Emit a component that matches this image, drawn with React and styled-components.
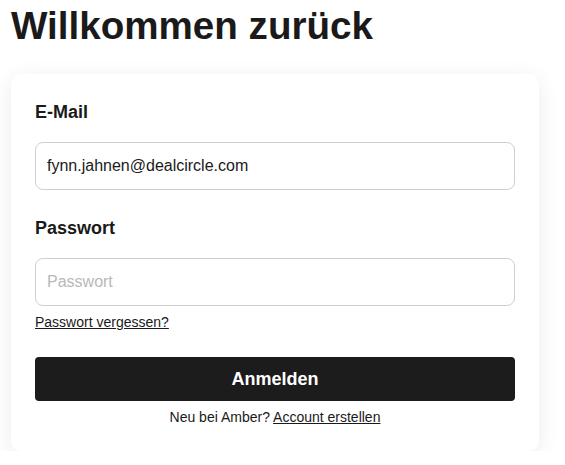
import React from "react";
import styled, { createGlobalStyle } from "styled-components";

const Global = createGlobalStyle`
  html, body { margin: 0; padding: 0; background: #ffffff; }
  body { font-family: "Liberation Sans", Arial, sans-serif; color: #1a1a1a; }
  * { box-sizing: border-box; }
`;

const Page = styled.div`
  padding: 3px 26px 0 11px;
  display: flex;
  flex-direction: column;
`;

const Title = styled.h1`
  margin: 0 0 25px;
  font-size: 38.6px;
  line-height: 46px;
  font-weight: 700;
  color: #1a1a1a;
`;

const Card = styled.div`
  width: 528px;
  background: #fff;
  border-radius: 10px;
  box-shadow: 0 4px 22px rgba(0, 0, 0, 0.08);
  padding: 24px;
  display: flex;
  flex-direction: column;
`;

const Label = styled.label`
  font-size: 18px;
  line-height: 28px;
  font-weight: 700;
  margin-bottom: 16px;
`;

const Input = styled.input`
  height: 48px;
  width: 100%;
  border: 1px solid #cfcfcf;
  border-radius: 8px;
  padding: 0 11px;
  font-family: "Liberation Sans", Arial, sans-serif;
  font-size: 16px;
  color: #1a1a1a;
  outline: none;
  margin-bottom: ${(p) => p.$mb || 0}px;
  &::placeholder { color: #b8b8b8; }
`;

const Link = styled.a`
  font-size: 14px;
  line-height: 20px;
  color: #1a1a1a;
  text-decoration: underline;
  cursor: pointer;
`;

const Forgot = styled.div`
  margin-top: 6px;
  margin-bottom: 25px;
  font-size: 14px;
  line-height: 20px;
`;

const Button = styled.button`
  height: 44px;
  width: 100%;
  border: none;
  border-radius: 4px;
  background: #1c1c1c;
  color: #fff;
  font-family: "Liberation Sans", Arial, sans-serif;
  font-size: 18px;
  font-weight: 700;
  cursor: pointer;
`;

const Footer = styled.div`
  margin-top: 6px;
  text-align: center;
  font-size: 14px;
  line-height: 20px;
  color: #1a1a1a;
`;

export default function App() {
  return (
    <>
      <Global />
      <Page>
        <Title>Willkommen zurück</Title>
        <Card>
          <Label>E-Mail</Label>
          <Input $mb={24} defaultValue="fynn.jahnen@dealcircle.com" />
          <Label>Passwort</Label>
          <Input type="password" placeholder="Passwort" />
          <Forgot>
            <Link>Passwort vergessen?</Link>
          </Forgot>
          <Button>Anmelden</Button>
          <Footer>
            Neu bei Amber? <Link>Account erstellen</Link>
          </Footer>
        </Card>
      </Page>
    </>
  );
}
